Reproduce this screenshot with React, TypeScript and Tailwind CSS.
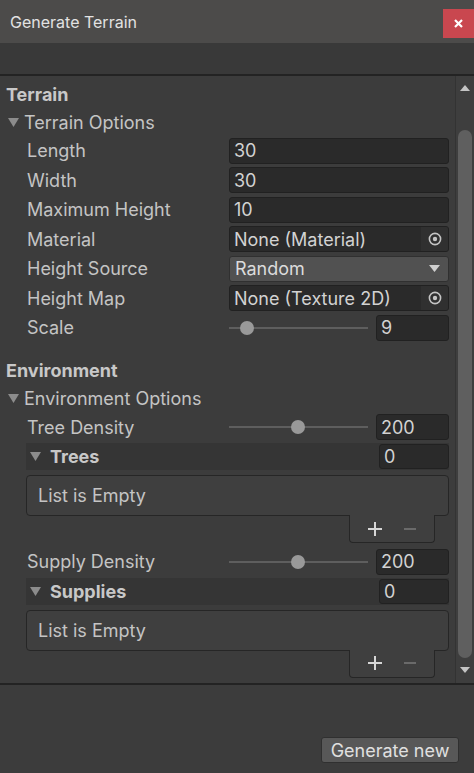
import React from "react";

const font = { fontFamily: "Inter, 'Noto Sans', sans-serif" };

function Fold({ className = "" }: { className?: string }) {
  return (
    <svg width="11" height="9" viewBox="0 0 11 9" className={className}>
      <path d="M0 0 L11 0 L5.5 9 Z" fill="#8c8c8c" />
    </svg>
  );
}

function Row({ label, children }: { label: string; children: React.ReactNode }) {
  return (
    <div className="flex h-[29.5px] items-center">
      <div className="w-[229px] shrink-0 pl-[27px] text-[18px] text-[#c4c4c4]">{label}</div>
      <div className="flex flex-1 items-center">{children}</div>
    </div>
  );
}

function Field({ value }: { value: string }) {
  return (
    <div className="flex h-[26px] flex-1 items-center rounded-[3px] border border-[#212121] bg-[#2a2a2a] px-[4px] text-[18px] text-[#d2d2d2]">
      {value}
    </div>
  );
}

function ObjectField({ value }: { value: string }) {
  return (
    <div className="flex h-[26px] flex-1 items-center overflow-hidden rounded-[3px] border border-[#212121] bg-[#2a2a2a] text-[18px] text-[#d2d2d2]">
      <span className="flex-1 px-[4px]">{value}</span>
      <span className="flex h-full w-[27px] items-center justify-center bg-[#303030]">
        <svg width="14" height="14" viewBox="0 0 14 14">
          <circle cx="7" cy="7" r="5.6" fill="none" stroke="#c4c4c4" strokeWidth="1.6" />
          <circle cx="7" cy="7" r="2.2" fill="#c4c4c4" />
        </svg>
      </span>
    </div>
  );
}

function Slider({ pos, value }: { pos: number; value: string }) {
  return (
    <div className="flex flex-1 items-center">
      <div className="relative h-[2px] w-[139px] bg-[#5e5e5e]">
        <div
          className="absolute top-[-6px] h-[14px] w-[14px] rounded-full bg-[#999999]"
          style={{ left: pos - 7 }}
        />
      </div>
      <div className="ml-[8px] flex h-[26px] flex-1 items-center rounded-[3px] border border-[#212121] bg-[#2a2a2a] px-[4px] text-[18px] text-[#d2d2d2]">
        {value}
      </div>
    </div>
  );
}

function ListBlock({ title }: { title: string }) {
  return (
    <div className="ml-[26px]">
      <div className="flex h-[27px] items-center bg-[#353535] pl-[4px]">
        <Fold />
        <span className="ml-[9px] flex-1 text-[18px] font-bold text-[#c8c8c8]">{title}</span>
        <div className="flex h-[25px] w-[70px] items-center rounded-[3px] border border-[#212121] bg-[#2a2a2a] px-[4px] text-[18px] text-[#d2d2d2]">
          0
        </div>
      </div>
      <div className="mt-[5px] flex h-[41px] items-center rounded-[4px] border border-[#262626] bg-[#3f3f3f] pl-[11px] text-[18px] text-[#c4c4c4]">
        List is Empty
      </div>
      <div className="flex justify-end pr-[14px]">
        <div className="-mt-px flex h-[28px] w-[86px] items-center justify-center gap-[22px] rounded-b-[4px] border border-t-0 border-[#262626] bg-[#3f3f3f]">
          <svg width="14" height="14" viewBox="0 0 14 14">
            <path d="M7 0 V14 M0 7 H14" stroke="#d6d6d6" strokeWidth="2" />
          </svg>
          <svg width="12" height="14" viewBox="0 0 12 14">
            <path d="M0 7 H12" stroke="#6a6a6a" strokeWidth="2" />
          </svg>
        </div>
      </div>
    </div>
  );
}

export default function App() {
  return (
    <div className="flex h-[773px] w-[474px] flex-col bg-[#3c3c3c]" style={font}>
      {/* title bar */}
      <div className="flex h-[43px] items-start bg-[#4c4b4a]">
        <span className="mt-[10px] ml-[10px] flex-1 text-[16px] text-[#e2e2e2]">Generate Terrain</span>
        <div className="mt-[9px] flex h-[29px] w-[31px] items-center justify-center bg-[#c9474f]">
          <svg width="9" height="9" viewBox="0 0 9 9">
            <path d="M1 1 L8 8 M8 1 L1 8" stroke="#ffffff" strokeWidth="2.2" />
          </svg>
        </div>
      </div>

      {/* toolbar */}
      <div className="h-[33px] border-b-2 border-[#232323] bg-[#393939]" />

      {/* inspector */}
      <div className="flex h-[609px] border-b-2 border-[#232323] bg-[#3c3c3c]">
        <div className="flex-1 pt-[4px] pr-[6px]">
          <div className="flex h-[28px] items-center pl-[6px] text-[18px] font-bold text-[#c8c8c8]">Terrain</div>
          <div className="flex h-[28px] items-center pl-[8px] text-[18px] text-[#c4c4c4]">
            <Fold />
            <span className="ml-[5px]">Terrain Options</span>
          </div>
          <Row label="Length"><Field value="30" /></Row>
          <Row label="Width"><Field value="30" /></Row>
          <Row label="Maximum Height"><Field value="10" /></Row>
          <Row label="Material"><ObjectField value="None (Material)" /></Row>
          <Row label="Height Source">
            <div className="flex h-[26px] flex-1 items-center rounded-[3px] border border-[#303030] bg-[#515151] pr-[8px] pl-[5px] text-[18px] text-[#dcdcdc]">
              <span className="flex-1">Random</span>
              <svg width="11" height="7" viewBox="0 0 11 7">
                <path d="M0 0 H11 L5.5 7 Z" fill="#d0d0d0" />
              </svg>
            </div>
          </Row>
          <Row label="Height Map"><ObjectField value="None (Texture 2D)" /></Row>
          <Row label="Scale"><Slider pos={18} value="9" /></Row>

          <div className="mt-[14px] flex h-[28px] items-center pl-[6px] text-[18px] font-bold text-[#c8c8c8]">Environment</div>
          <div className="flex h-[28px] items-center pl-[8px] text-[18px] text-[#c4c4c4]">
            <Fold />
            <span className="ml-[5px]">Environment Options</span>
          </div>
          <Row label="Tree Density"><Slider pos={69} value="200" /></Row>
          <div className="mt-[1px]">
            <ListBlock title="Trees" />
          </div>
          <div className="mt-[4px]">
            <Row label="Supply Density"><Slider pos={69} value="200" /></Row>
          </div>
          <div className="mt-[1px]">
            <ListBlock title="Supplies" />
          </div>
        </div>

        {/* scrollbar */}
        <div className="flex w-[19px] flex-col items-center border-l border-[#333333] bg-[#3e3e3e]">
          <svg width="10" height="6" viewBox="0 0 10 6" className="mt-[9px]">
            <path d="M0 6 H10 L5 0 Z" fill="#c4c4c4" />
          </svg>
          <div className="mt-[39px] h-[528px] w-[14px] rounded-full bg-[#5f5f5f]" />
          <svg width="10" height="6" viewBox="0 0 10 6" className="mt-[9px]">
            <path d="M0 0 H10 L5 6 Z" fill="#c4c4c4" />
          </svg>
        </div>
      </div>

      {/* footer */}
      <div className="flex flex-1 items-end justify-end pr-[15px] pb-[10px]">
        <div className="flex h-[26px] w-[138px] items-center justify-center rounded-[3px] border border-[#303030] bg-[#585858] text-[18px] text-[#e0e0e0]">
          Generate new
        </div>
      </div>
    </div>
  );
}
